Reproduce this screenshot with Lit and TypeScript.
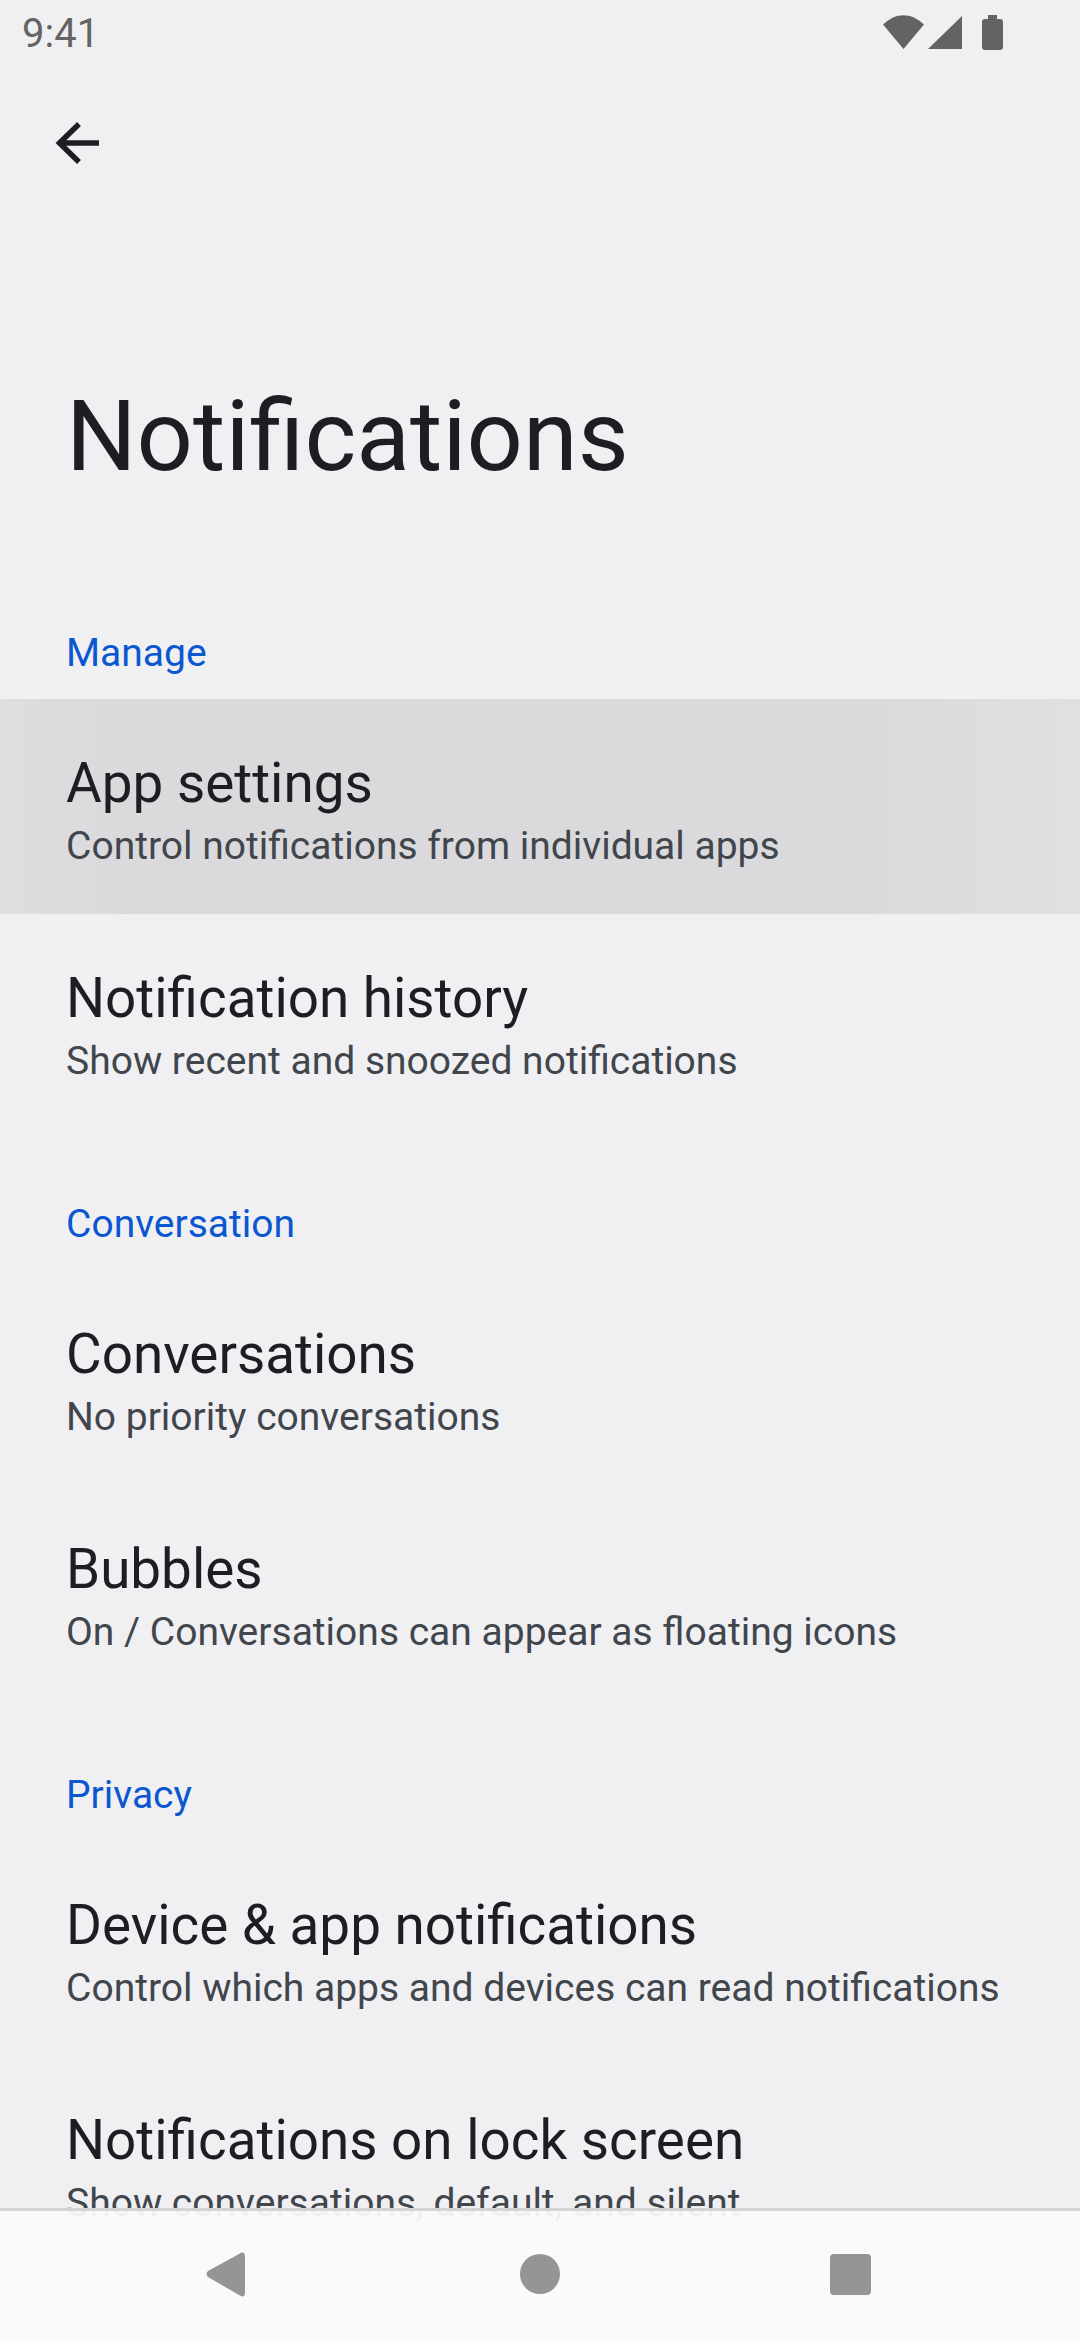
import { LitElement, html, css } from "lit";
import { customElement } from "lit/decorators.js";

const sections = [
  {
    name: "Manage",
    items: [
      { title: "App settings", sub: "Control notifications from individual apps", active: true },
      { title: "Notification history", sub: "Show recent and snoozed notifications" },
    ],
  },
  {
    name: "Conversation",
    items: [
      { title: "Conversations", sub: "No priority conversations" },
      { title: "Bubbles", sub: "On / Conversations can appear as floating icons" },
    ],
  },
  {
    name: "Privacy",
    items: [
      { title: "Device & app notifications", sub: "Control which apps and devices can read notifications" },
      { title: "Notifications on lock screen", sub: "Show conversations, default, and silent" },
    ],
  },
];

@customElement("app-root")
export class AppRoot extends LitElement {
  static styles = css`
    :host {
      display: block;
      position: relative;
      width: 1080px;
      height: 2340px;
      overflow: hidden;
      background: #f0f0f3;
      font-family: Roboto, sans-serif;
    }
    .status {
      height: 66px;
      display: flex;
      align-items: center;
      justify-content: space-between;
      padding: 0 40px 0 22px;
      color: #636363;
      font-size: 40px;
    }
    .status__icons {
      display: flex;
      align-items: center;
    }
    .toolbar {
      height: 154px;
      padding-left: 47px;
      display: flex;
      align-items: center;
    }
    .title {
      height: 337px;
      margin: 0;
      padding: 156px 0 0 66px;
      box-sizing: border-box;
      font-size: 99px;
      line-height: 120px;
      font-weight: 400;
      color: #1c1e21;
    }
    .section__name {
      height: 142px;
      box-sizing: border-box;
      padding: 73px 0 0 66px;
      font-size: 39px;
      line-height: 46px;
      color: #0b57d0;
    }
    .item {
      height: 214.5px;
      box-sizing: border-box;
      padding: 52px 0 0 66px;
    }
    .item--active {
      background: linear-gradient(90deg, #dedee0 0, #dadadc 130px, #dadadc 870px, #dcdcde 900px, #dddddf 970px, #e0e0e2 1080px);
    }
    .item__title {
      font-size: 54.8px;
      line-height: 64px;
      color: #1c1e21;
    }
    .item__sub {
      font-size: 39px;
      line-height: 50px;
      margin-top: 6px;
      color: #41464d;
    }
    .nav {
      position: absolute;
      left: 0;
      right: 0;
      bottom: 0;
      height: 129px;
      background: rgba(250, 250, 251, 0.95);
      border-top: 3px solid #d3d3d5;
    }
    .nav svg {
      position: absolute;
      left: 0;
      top: 0;
    }
  `;

  render() {
    return html`
      <div class="status">
        <span>9:41</span>
        <span class="status__icons">
          <svg width="200" height="66" viewBox="840 0 200 66" fill="#636363">
            <path d="M883 24.5C896 12 911 12 924 24.5L903.5 49Z" />
            <path d="M928 49L962 16V49Z" />
            <path d="M988 15h9v4h3q3 0 3 3v25q0 3-3 3h-15q-3 0-3-3V22q0-3 3-3h3Z" />
          </svg>
        </span>
      </div>
      <div class="toolbar">
        <svg width="60" height="60" viewBox="0 0 60 60" fill="none" stroke="#1c1e21" stroke-width="5.5">
          <path d="M52 30H12" />
          <path d="M32 11L12.5 30L32 49" />
        </svg>
      </div>
      <h1 class="title">Notifications</h1>
      ${sections.map(
        (s) => html`
          <div class="section__name">${s.name}</div>
          ${s.items.map(
            (i) => html`
              <div class="item ${i.active ? "item--active" : ""}">
                <div class="item__title">${i.title}</div>
                <div class="item__sub">${i.sub}</div>
              </div>
            `
          )}
        `
      )}
      <div class="nav">
        <svg width="1080" height="129" viewBox="0 0 1080 129" fill="#959595">
          <path d="M208 66Q205 63 208 60L239 43Q245 39 245 46V81Q245 88 239 84Z" />
          <ellipse cx="540" cy="63" rx="20" ry="20" />
          <rect x="830" y="43" width="41" height="41" rx="4" />
        </svg>
      </div>
    `;
  }
}
